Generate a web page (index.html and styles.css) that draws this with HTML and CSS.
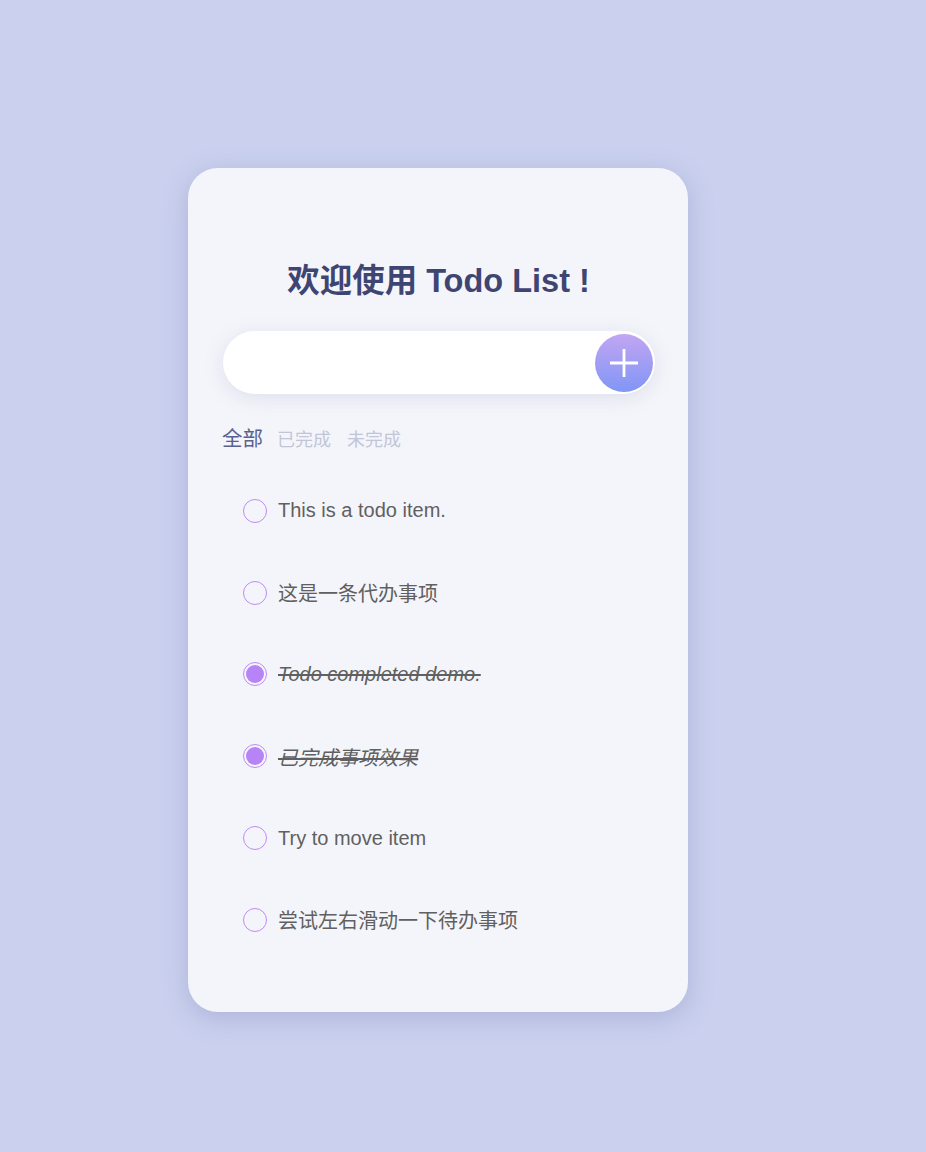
FILE: index.html
```html
<!DOCTYPE html>
<html lang="zh">
<head>
<meta charset="utf-8">
<title>Todo List</title>
<link rel="stylesheet" href="styles.css">
</head>
<body>
<div class="page">
  <div class="card">
    <h1 class="title">欢迎使用 Todo List !</h1>
    <div class="input-bar">
      <input class="input" type="text">
      <button class="add-btn" type="button" aria-label="add">
        <svg width="30" height="30" viewBox="0 0 30 30"><path d="M15 1V29M1 15H29" stroke="#fff" stroke-width="2.8" fill="none"/></svg>
      </button>
    </div>
    <div class="filters">
      <span class="filter active">全部</span>
      <span class="filter">已完成</span>
      <span class="filter">未完成</span>
    </div>
    <ul class="list">
      <li class="item"><span class="check"></span><span class="text">This is a todo item.</span></li>
      <li class="item"><span class="check"></span><span class="text">这是一条代办事项</span></li>
      <li class="item done"><span class="check"></span><span class="text">Todo completed demo.</span></li>
      <li class="item done"><span class="check"></span><span class="text">已完成事项效果</span></li>
      <li class="item"><span class="check"></span><span class="text">Try to move item</span></li>
      <li class="item"><span class="check"></span><span class="text">尝试左右滑动一下待办事项</span></li>
    </ul>
  </div>
</div>
</body>
</html>
```

FILE: styles.css
```css
html, body {
  margin: 0;
  padding: 0;
}
body {
  background: #cad0ee;
  font-family: "Liberation Sans", Arial, "Noto Sans CJK SC", sans-serif;
}
.page {
  padding-top: 168px;
  padding-left: 188px;
  min-height: 1152px;
  box-sizing: border-box;
}
.card {
  width: 500px;
  height: 844px;
  box-sizing: border-box;
  background: #f4f5fa;
  border-radius: 30px;
  box-shadow: 0 6px 24px rgba(120, 130, 180, 0.35);
  padding: 95px 33px 0 34px;
}
.title {
  margin: 0;
  text-align: center;
  font-size: 32.5px;
  font-weight: bold;
  color: #3f4573;
  line-height: 36px;
}
.input-bar {
  margin-top: 32px;
  margin-left: 1px;
  width: 432px;
  height: 63px;
  background: #fff;
  border-radius: 32px;
  box-shadow: 0 4px 18px rgba(160, 165, 200, 0.25);
  display: flex;
  align-items: center;
  justify-content: space-between;
  padding: 0 2px 0 24px;
  box-sizing: border-box;
}
.input {
  border: none;
  outline: none;
  background: transparent;
  flex: 1;
  height: 40px;
  font-size: 18px;
}
.add-btn {
  width: 58px;
  height: 58px;
  border-radius: 50%;
  border: none;
  padding: 0;
  background: linear-gradient(180deg, #c2a5f2 0%, #8096f6 100%);
  display: flex;
  align-items: center;
  justify-content: center;
  flex: none;
}
.filters {
  margin-top: 28px;
  display: flex;
  align-items: baseline;
  gap: 16px;
}
.filter {
  font-size: 18px;
  color: #c2c5d8;
}
.filter.active {
  font-size: 20.5px;
  color: #5a618f;
  margin-right: -2px;
}
.list {
  list-style: none;
  margin: 18px 0 0 0;
  padding: 0 0 0 21px;
}
.item {
  display: flex;
  align-items: center;
  height: 81.8px;
}
.check {
  width: 24px;
  height: 24px;
  border: 1px solid #c08af6;
  border-radius: 50%;
  box-sizing: border-box;
  flex: none;
  margin-right: 11px;
  position: relative;
}
.item.done .check::after {
  content: "";
  position: absolute;
  left: 2px;
  top: 2px;
  right: 2px;
  bottom: 2px;
  border-radius: 50%;
  background: #b684f6;
}
.text {
  font-size: 20px;
  color: #606060;
}
.item.done .text {
  font-style: italic;
  text-decoration: line-through;
}
```
